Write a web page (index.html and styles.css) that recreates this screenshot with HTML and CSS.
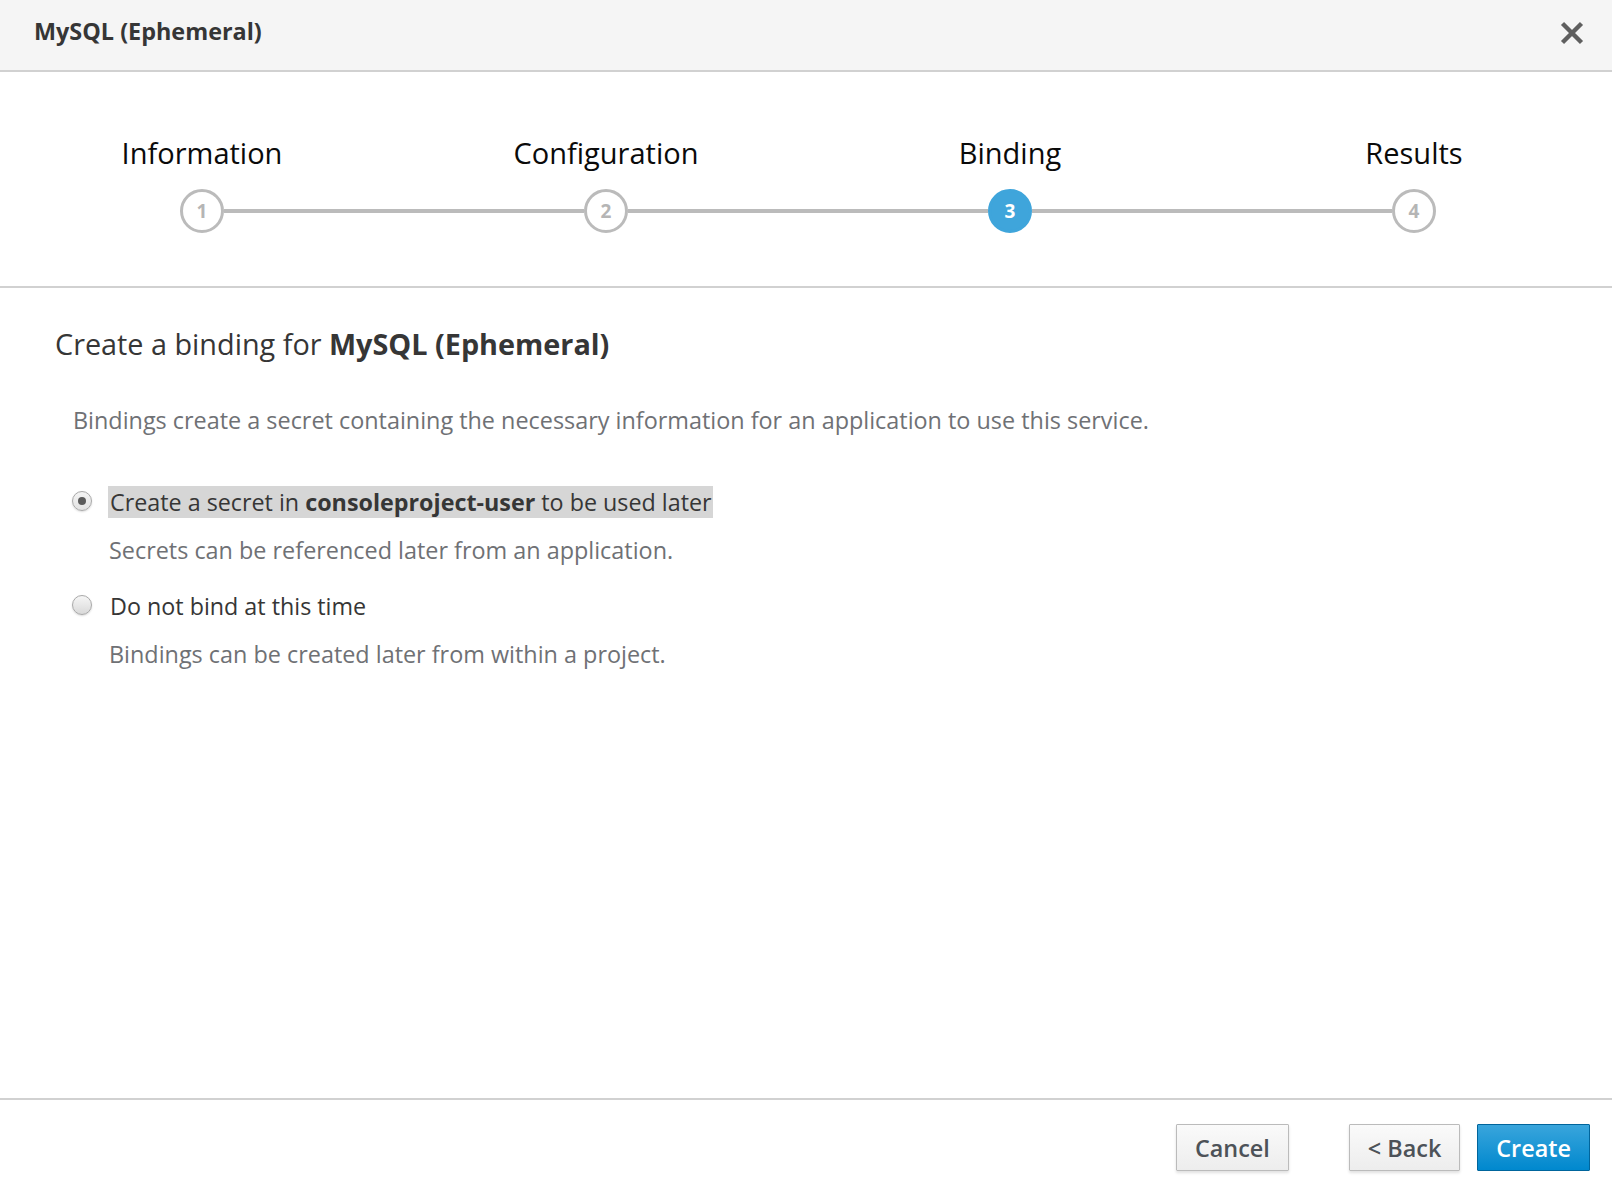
FILE: index.html
```html
<!DOCTYPE html>
<html lang="en">
<head>
<meta charset="utf-8">
<title>MySQL (Ephemeral)</title>
<link rel="stylesheet" href="styles.css">
</head>
<body>
<div class="modal">
  <header class="modal-header">
    <h4 class="modal-title">MySQL (Ephemeral)</h4>
    <button class="close" aria-label="Close">
      <svg width="24" height="24" viewBox="0 0 24 24"><path d="M2.5 2.5 L21.5 21.5 M21.5 2.5 L2.5 21.5" stroke="#5f5f5f" stroke-width="4.4" fill="none"/></svg>
    </button>
  </header>

  <nav class="wizard-steps">
    <div class="step">
      <div class="step-title">Information</div>
      <div class="step-track"><span class="track track-left"></span><span class="step-num">1</span><span class="track track-right"></span></div>
    </div>
    <div class="step">
      <div class="step-title">Configuration</div>
      <div class="step-track"><span class="track track-left"></span><span class="step-num">2</span><span class="track track-right"></span></div>
    </div>
    <div class="step active">
      <div class="step-title">Binding</div>
      <div class="step-track"><span class="track track-left"></span><span class="step-num">3</span><span class="track track-right"></span></div>
    </div>
    <div class="step">
      <div class="step-title">Results</div>
      <div class="step-track"><span class="track track-left"></span><span class="step-num">4</span><span class="track track-right"></span></div>
    </div>
  </nav>

  <main class="wizard-body">
    <h3 class="bind-title">Create a binding for <strong>MySQL (Ephemeral)</strong></h3>
    <p class="intro">Bindings create a secret containing the necessary information for an application to use this service.</p>
    <div class="options">
      <div class="option">
        <div class="option-row"><span class="radio checked"></span><span class="option-label selected">Create a secret in <strong>consoleproject-user</strong> to be used later</span></div>
        <div class="option-help">Secrets can be referenced later from an application.</div>
      </div>
      <div class="option">
        <div class="option-row"><span class="radio"></span><span class="option-label">Do not bind at this time</span></div>
        <div class="option-help">Bindings can be created later from within a project.</div>
      </div>
    </div>
  </main>

  <footer class="modal-footer">
    <button class="btn btn-default btn-cancel">Cancel</button>
    <button class="btn btn-default">&lt; Back</button>
    <button class="btn btn-primary">Create</button>
  </footer>
</div>
</body>
</html>
```

FILE: styles.css
```css
* { box-sizing: border-box; }
html, body { margin: 0; height: 100%; }
body {
  font-family: "Open Sans", "Noto Sans", sans-serif;
  color: #363636;
  background: #fff;
}
.modal {
  display: flex;
  flex-direction: column;
  height: 100vh;
}

/* header */
.modal-header {
  flex: none;
  height: 72px;
  background: #f5f5f5;
  border-bottom: 2px solid #d1d1d1;
  display: flex;
  align-items: center;
  justify-content: space-between;
  padding: 0 28px 8px 34px;
}
.modal-title {
  margin: 0;
  font-size: 23.4px;
  font-weight: 700;
  line-height: 32px;
  color: #363636;
}
.close {
  border: 0;
  background: none;
  padding: 0;
  width: 24px;
  height: 24px;
  margin-top: 4px;
  display: block;
}
.close svg { display: block; }

/* wizard steps */
.wizard-steps {
  flex: none;
  display: grid;
  grid-template-columns: repeat(4, 404px);
  padding: 62px 0 53px;
  border-bottom: 2px solid #d1d1d1;
}
.step {
  display: flex;
  flex-direction: column;
}
.step-title {
  text-align: center;
  font-size: 29px;
  line-height: 38px;
  color: #0a0a0a;
}
.step-track {
  display: flex;
  align-items: center;
  margin-top: 17px;
}
.track {
  flex: 1;
  height: 4px;
  background: #bbbbbb;
}
.step:first-child .track-left,
.step:last-child .track-right { visibility: hidden; }
.step-num {
  flex: none;
  width: 44px;
  height: 44px;
  border-radius: 50%;
  border: 3px solid #bbbbbb;
  display: flex;
  align-items: center;
  justify-content: center;
  font-size: 19px;
  font-weight: 700;
  color: #b5b5b5;
  background: #fff;
}
.step.active .step-num {
  background: #3fa5db;
  border-color: #3fa5db;
  color: #fff;
}

/* body */
.wizard-body {
  flex: 1;
  padding: 36px 0 0 55px;
}
.bind-title {
  margin: 0;
  font-size: 28.8px;
  font-weight: 400;
  line-height: 40px;
  color: #363636;
}
.bind-title strong { font-weight: 700; }
.intro {
  margin: 40px 0 0 18px;
  font-size: 23.4px;
  line-height: 32px;
  color: #6f7175;
}
.options {
  margin-top: 50px;
  padding-left: 17px;
}
.option + .option { margin-top: 24px; }
.option-row {
  display: flex;
  align-items: flex-start;
}
.radio {
  flex: none;
  width: 20px;
  height: 20px;
  margin-top: 5px;
  margin-right: 16px;
  border-radius: 50%;
  border: 1px solid #a9a9a9;
  background: linear-gradient(#f6f6f6, #d9d9d9);
  box-shadow: 0 1px 2px rgba(0, 0, 0, 0.15);
  display: flex;
  align-items: center;
  justify-content: center;
}
.radio.checked {
  background: linear-gradient(#f4f4f4, #e2e2e2);
}
.radio.checked::before {
  content: "";
  width: 8px;
  height: 8px;
  border-radius: 50%;
  background: #5a5a5a;
}
.option-label {
  font-size: 23.3px;
  line-height: 32px;
  color: #363636;
  padding: 0 1px 0 2px;
}
.option-label strong { font-weight: 700; }
.option-label.selected { background: #d6d6d6; }
.option-help {
  margin: 16px 0 0 37px;
  font-size: 23.4px;
  line-height: 32px;
  color: #6f7175;
}

/* footer */
.modal-footer {
  flex: none;
  border-top: 2px solid #d1d1d1;
  padding: 24px 22px 23px;
  display: flex;
  justify-content: flex-end;
  gap: 17px;
}
.btn {
  height: 47px;
  padding: 0 18px;
  font-family: "Open Sans", "Noto Sans", sans-serif;
  font-size: 23.4px;
  font-weight: 600;
  border: 1px solid #bbbbbb;
  border-radius: 1px;
  cursor: pointer;
}
.btn-default {
  background: linear-gradient(#fafafa, #ededed);
  color: #4d5258;
  box-shadow: 0 2px 3px rgba(3, 3, 3, 0.12);
}
.btn-cancel { margin-right: 43px; }
.btn-primary {
  background: linear-gradient(#39a5dc, #0088ce);
  border-color: #00659c;
  color: #fff;
}
```
